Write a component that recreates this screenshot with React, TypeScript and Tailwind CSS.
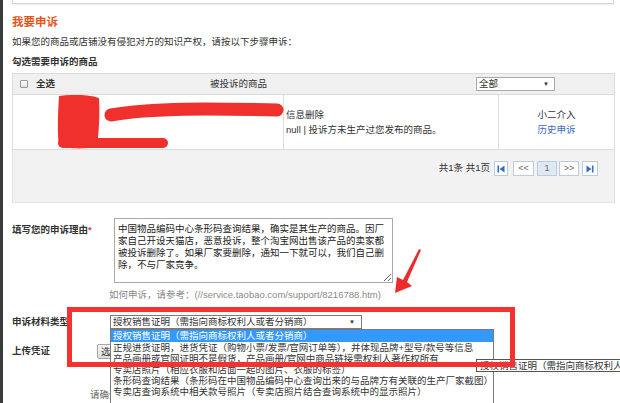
import React from 'react';

const options = [
  '授权销售证明（需指向商标权利人或者分销商）',
  '正规进货证明，进货凭证（购物小票/发票/官网订单等），并体现品牌+型号/款号等信息',
  '产品画册或官网证明不是假货，产品画册/官网中商品链接需权利人著作权所有',
  '专卖店照片（相应衣服和店面一起的图片、衣服的标签）',
  '条形码查询结果（条形码在中国物品编码中心查询出来的与品牌方有关联的生产厂家截图）',
  '专卖店查询系统中相关款号照片（专卖店照片结合查询系统中的显示照片）',
];

const reason =
  '中国物品编码中心条形码查询结果，确实是其生产的商品。因厂\n家自己开设天猫店，恶意投诉，整个淘宝网出售该产品的卖家都\n被投诉删除了。如果厂家要删除，通知一下就可以，我们自己删\n除，不与厂家竞争。';

function PageBtn({ children, active, w }: { children: React.ReactNode; active?: boolean; w: string }) {
  return (
    <div
      className={`${w} h-[15px] flex items-center justify-center border border-[#bccbdd] text-[9px] text-[#666] ${
        active ? 'bg-[#dfe9f4] text-[#333]' : 'bg-white'
      }`}
    >
      {children}
    </div>
  );
}

export default function App() {
  return (
    <div className="relative w-[620px] h-[403px] overflow-hidden bg-white border-l-[3px] border-[#3c3c3c] text-[#333] text-[9.5px] font-['Liberation_Sans','Noto_Sans_CJK_SC',sans-serif]">
      <div className="pl-[9px] pr-[5px]">
        {/* top panel edge */}
        <div className="h-[4px] mr-[1px] border-x border-b border-[#d4d4d4] shadow-[0_1px_2px_rgba(0,0,0,0.08)]" />

        <div className="mt-[11px] h-[14px] leading-[14px] text-[11.5px] font-bold text-[#e3561c]">我要申诉</div>
        <div className="mt-[6px] leading-[14px]">如果您的商品或店铺没有侵犯对方的知识产权，请按以下步骤申诉：</div>
        <div className="mt-[6px] leading-[14px] font-bold">勾选需要申诉的商品</div>

        {/* table */}
        <div className="mt-[4px]">
          <div className="h-[22px] flex items-center bg-[#f0f0f0] border border-[#dcdcdc]">
            <div className="w-[197px] pl-[7px] flex items-center gap-[8px]">
              <div className="w-[8px] h-[8px] rounded-[1px] border border-[#9a9a9a] bg-gradient-to-b from-white to-[#e4e4e4]" />
              <span className="font-bold">全选</span>
            </div>
            <div className="w-[266px]">被投诉的商品</div>
            <div className="w-[79px] h-[14px] border border-[#a9a9a9] bg-white flex items-center justify-between pl-[2px] pr-[5px]">
              <span>全部</span>
              <span className="text-[6px]">▼</span>
            </div>
          </div>

          <div className="h-[55px] grid grid-cols-[42px_229px_215px_1fr] border-x border-b border-[#dcdcdc]">
            <div />
            <div className="relative border-r border-[#dcdcdc]">
              <svg className="absolute left-0 top-0" width="229" height="55" viewBox="0 0 229 55">
                <path d="M4 1 C 18 -1, 36 0, 44 3 C 45 18, 44 36, 42 52 C 30 54, 12 54, 4 51 C 2 36, 3 18, 4 1 Z" fill="#f0302c" />
                <path d="M56 20 C 100 12, 170 14, 222 15" stroke="#f0302c" strokeWidth="13" strokeLinecap="round" fill="none" />
                <path d="M8 48 L 108 48" stroke="#f0302c" strokeWidth="10" strokeLinecap="round" fill="none" />
              </svg>
            </div>
            <div className="border-r border-[#dcdcdc] pl-[2px] pt-[12px] leading-[15px]">
              <div>信息删除</div>
              <div>null | 投诉方未生产过您发布的商品。</div>
            </div>
            <div className="pt-[12px] leading-[15px] text-center">
              <div>小二介入</div>
              <div className="text-[#3c6cc0]">历史申诉</div>
            </div>
          </div>

          <div className="h-[53px] bg-[#f2f2f2] border-x border-b border-[#e2e2e2] flex justify-end pr-[16px] pt-[11px]">
            <div className="flex items-center h-[15px]">
              <span className="mr-[4px]">共1条 共1页</span>
              <PageBtn w="w-[14px]">
                <svg width="8" height="8" viewBox="0 0 8 8">
                  <rect x="0.5" y="0.5" width="1.6" height="7" fill="#2f6fc2" />
                  <path d="M7.5 0.5 L2.6 4 L7.5 7.5 Z" fill="#2f6fc2" />
                </svg>
              </PageBtn>
              <div className="w-[5px]" />
              <PageBtn w="w-[21px]">&lt;&lt;</PageBtn>
              <div className="w-[3px]" />
              <PageBtn w="w-[20px]" active>
                1
              </PageBtn>
              <div className="w-[2px]" />
              <PageBtn w="w-[20px]">&gt;&gt;</PageBtn>
              <div className="w-[3px]" />
              <PageBtn w="w-[16px]">
                <svg width="8" height="8" viewBox="0 0 8 8">
                  <path d="M0.5 0.5 L5.4 4 L0.5 7.5 Z" fill="#2f6fc2" />
                  <rect x="5.9" y="0.5" width="1.6" height="7" fill="#2f6fc2" />
                </svg>
              </PageBtn>
            </div>
          </div>
        </div>

        {/* reason */}
        <div className="mt-[15px] flex">
          <div className="w-[102px] pt-[5px] leading-[14px] font-bold">
            填写您的申诉理由<span className="text-[#e4393c]">*</span>
          </div>
          <textarea
            readOnly
            wrap="off"
            value={reason}
            className="w-[279px] h-[65px] border border-[#a9a9a9] px-[3px] pt-[4px] leading-[12px] text-[9.5px] text-[#222] overflow-hidden resize-y outline-none font-['Liberation_Sans','Noto_Sans_CJK_SC',sans-serif]"
          />
        </div>
        <div className="mt-[5px] ml-[97px] leading-[14px] text-[#8a8a8a]">
          如何申诉，请参考：(//service.taobao.com/support/8216788.htm)
        </div>

        {/* material type */}
        <div className="mt-[13px] flex h-[14px] items-center">
          <div className="w-[98px] leading-[14px] font-bold">申诉材料类型</div>
          <div className="relative">
            <div className="w-[252px] h-[14px] border border-[#7a7a7a] bg-white flex items-center justify-between pl-[2px] pr-[6px] whitespace-nowrap">
              <span>{options[0]}</span>
              <span className="text-[6px]">▼</span>
            </div>
            <div className="absolute left-0 top-full z-10 w-[384px] h-[110px] border border-[#7a7a7a] bg-white">
              {options.map((o, i) => (
                <div
                  key={o}
                  className={`${i === 0 ? 'h-[12px] bg-[#3399ff] text-white' : 'h-[11px]'} pl-[2px] leading-[11px] whitespace-nowrap`}
                >
                  {o}
                </div>
              ))}
            </div>
          </div>
        </div>

        {/* upload */}
        <div className="mt-[15px] flex items-center h-[14px]">
          <div className="w-[85px] leading-[14px] font-bold">上传凭证</div>
          <div className="h-[15px] px-[3px] border border-[#a6a6a6] rounded-[2px] bg-gradient-to-b from-[#f6f6f6] to-[#dcdcdc] leading-[13px] whitespace-nowrap">
            选择文件
          </div>
        </div>

        <div className="mt-[30px] ml-[78px] leading-[14px] text-[#666] whitespace-nowrap">请确保上传的凭证清晰可见</div>
      </div>

      {/* tooltip */}
      <div className="absolute left-[473px] top-[359px] z-20 h-[13px] pr-[4px] pl-[3px] border border-[#555] bg-white leading-[11px] whitespace-nowrap">
        {options[0]}
      </div>

      {/* annotation: red box and arrow */}
      <div className="absolute left-[64px] top-[307px] z-30 w-[448px] h-[60px] border-[5px] border-[#f5322f]" />
      <svg className="absolute left-[-3px] top-0 z-30 pointer-events-none" width="620" height="403" viewBox="0 0 620 403">
        <path d="M421 250 L407 282 L412 286 L395 293 L397 277 L403 280 L419 249 Z" fill="#ee2b2b" />
      </svg>
    </div>
  );
}
